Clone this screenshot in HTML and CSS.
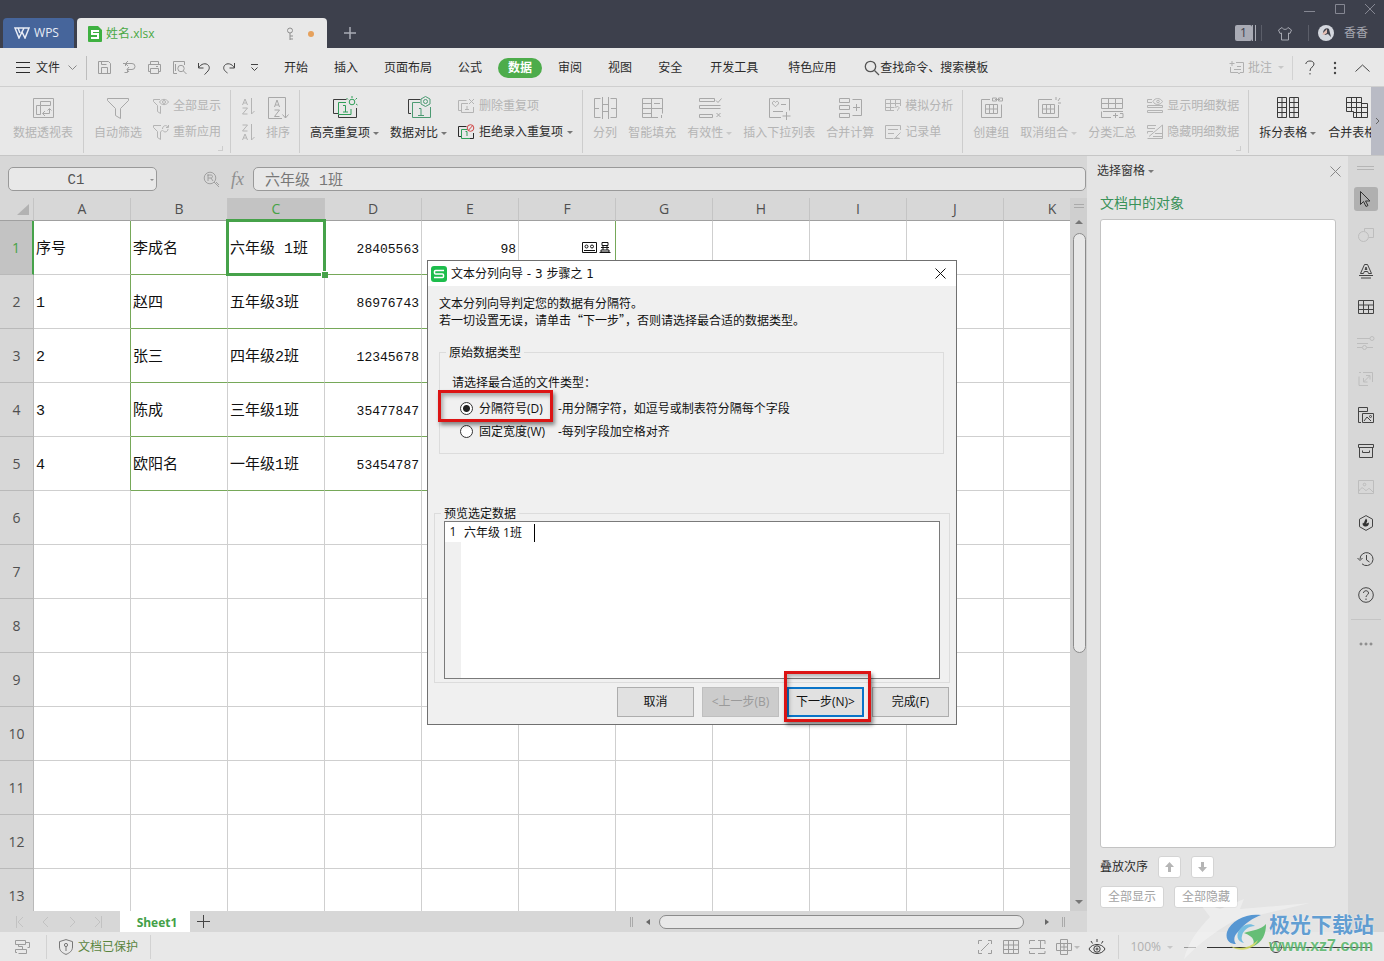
FILE: index.html
```html
<!DOCTYPE html>
<html lang="zh-CN">
<head>
<meta charset="utf-8">
<title>姓名.xlsx - WPS</title>
<link rel="stylesheet" href="styles.css">
</head>
<body>
<header class="titlebar">
  <button class="wps"><svg class="ic w2" width="16" height="12" viewBox="0 0 16 12"><path d="M1 1h14l-4 10-3-6-3 6L1 1l3 0 2 5M8 5l2-4"/></svg>WPS</button>
  <div class="doctab">
    <svg width="14" height="16" viewBox="0 0 14 16"><path fill="#3fb141" d="M1 0h9l4 4v11a1 1 0 0 1-1 1H1a1 1 0 0 1-1-1V1a1 1 0 0 1 1-1z"/><path fill="none" stroke="#fff" stroke-width="2" d="M11 5H4v3h6v4H3"/></svg>
    <span class="docname">姓名.xlsx</span>
    <svg class="ic key" width="10" height="14" viewBox="0 0 10 14"><circle cx="5" cy="3.500" r="2.500"/><path d="M5 6v7M5 9h3M5 12h3"/></svg>
    <i class="unsaved"></i>
  </div>
  <button class="newtab" aria-label="新建"><svg class="ic w2" width="12" height="12" viewBox="0 0 12 12"><path d="M6 0v12M0 6h12"/></svg></button>
  <div class="winside">
    <div class="winbtns">
      <button aria-label="最小化"><svg class="ic" width="11" height="11" viewBox="0 0 11 11"><path d="M0 8.500h11"/></svg></button>
      <button aria-label="最大化"><svg class="ic" width="11" height="11" viewBox="0 0 11 11"><path d="M1.500 1.500h9v9h-9z"/></svg></button>
      <button aria-label="关闭"><svg class="ic" width="11" height="11" viewBox="0 0 11 11"><path d="M1 1l10 10M11 1L1 11"/></svg></button>
    </div>
    <div class="user">
      <span class="count">1</span><span class="bars"></span>
      <i class="vsep"></i>
      <svg class="ic shirt" width="16" height="15" viewBox="0 0 16 15"><path d="M5 1.500L1.500 4 3 7.500l1.500-.5v7h7V7l1.500.5L14.500 4 11 1.500C10 4 6 4 5 1.500z"/></svg>
      <i class="vsep"></i>
      <svg width="16" height="16" viewBox="0 0 16 16"><circle cx="8" cy="8" r="8" fill="#d4d7de"/><path d="M5 8C5 4 9 2 11 4l2 8-3-3-3 1z" fill="#40424c"/><path d="M4 9l5-5v4l-3 2z" fill="#e3bdb4"/></svg>
      <span>香香</span>
    </div>
  </div>
</header>

<nav class="menubar">
  <button class="file"><svg class="ic" width="14" height="11" viewBox="0 0 14 11"><path d="M0 .5h14M0 5.500h14M0 10.500h14"/></svg>文件<svg class="ic chev" width="9" height="6" viewBox="0 0 9 6"><path d="M.5.5l4 4 4-4"/></svg></button>
  <div class="qat">
    <button aria-label="保存"><svg class="ic" width="15" height="15" viewBox="0 0 15 15"><path d="M1.500 1.500h10l2 2v10h-12zM4.500 13.500v-6h6v6M4.500 1.500v3h5"/></svg></button>
    <button aria-label="输出"><svg class="ic" width="15" height="15" viewBox="0 0 15 15"><path d="M3.500 6V3.500H10a3 3 0 0 1 0 6H5.500v3h-3M6 1L3.500 3.500 6 6M1 3.500h3M7 7l-2 2.500L7 12"/></svg></button>
    <button aria-label="打印"><svg class="ic" width="15" height="15" viewBox="0 0 15 15"><path d="M3.500 4.500v-3h8v3M3.500 11.500h-2v-7h12v7h-2M3.500 8.500h8v5h-8zM9 6.500h2"/></svg></button>
    <button aria-label="打印预览"><svg class="ic" width="15" height="15" viewBox="0 0 15 15"><path d="M5 13.500H1.500v-12h11V5M11.500 11l3 3M3.500 4v7"/><circle cx="9" cy="8.500" r="3.200"/></svg></button>
    <button class="on" aria-label="撤销"><svg class="ic" width="14" height="14" viewBox="0 0 14 14"><path d="M1.500 2v5h5M1.500 7C4 2.500 9 1.500 11.500 4.500c2 3 0 5.500-4 9"/></svg></button>
    <button class="on" aria-label="恢复"><svg class="ic" width="14" height="14" viewBox="0 0 14 14"><path d="M12.500 2v5h-5M12.500 7C10 2.500 5 1.500 2.500 4.500c-2 3 0 5.500 3 7.500"/></svg></button>
    <button class="on" aria-label="更多"><svg class="ic" width="9" height="8" viewBox="0 0 9 8"><path d="M1 .5h7M1.500 3.500l3 3 3-3"/></svg></button>
  </div>
  <div class="tabs">
    <button>开始</button><button>插入</button><button>页面布局</button><button>公式</button><button class="active">数据</button><button>审阅</button><button>视图</button><button>安全</button><button class="wide">开发工具</button><button class="wide">特色应用</button>
  </div>
  <button class="search"><svg class="ic" width="16" height="16" viewBox="0 0 16 16"><circle cx="6.500" cy="6.500" r="5.200"/><path d="M10.500 10.500l4.500 4.500"/></svg>查找命令、搜索模板</button>
  <div class="menuright">
    <button class="dim"><svg class="ic" width="16" height="14" viewBox="0 0 16 14"><path d="M7 1.500h7.500v10H11l-1 1.500-1-1.500H1.500V6M3 0v5M.5 2.500h5M5 8.500h7M8 5.500h4"/></svg>批注<i class="arr"></i></button>
    <i class="vsep light"></i>
    <button aria-label="帮助"><svg class="ic" width="10" height="15" viewBox="0 0 10 15"><path d="M.8 4C1 0 9 0 9 4c0 3-4 3-4 7M5 13v1.500"/></svg></button>
    <button aria-label="更多"><svg width="4" height="14" viewBox="0 0 4 14" fill="#444"><circle cx="2" cy="2" r="1.200"/><circle cx="2" cy="7" r="1.200"/><circle cx="2" cy="12" r="1.200"/></svg></button>
    <button aria-label="收起"><svg class="ic" width="15" height="8" viewBox="0 0 15 8"><path d="M.5 7.500l7-6.500 7 6.500"/></svg></button>
  </div>
</nav>

<div class="ribbon">
  <div class="groups">
    <div class="group">
      <button class="big"><svg class="ic" width="24" height="24" viewBox="0 0 24 24"><path d="M2.500 2.500h20v19h-20zM9.500 5.500h10v4h-10zM5.500 9.500h4v9h-4zM12 17.500h6.500V13M14 15l-2.500 2.500L14 20M16.500 14.500l2-2 2 2"/></svg><span>数据透视表</span></button>
    </div>
    <div class="group corner-mark">
      <button class="big"><svg class="ic" width="24" height="24" viewBox="0 0 24 24"><path d="M1.500 2.500h21v2l-8 8v10l-5-3v-7l-8-8z"/></svg><span>自动筛选</span></button>
      <div class="stack">
        <button><svg class="ic" width="16" height="16" viewBox="0 0 16 16"><path d="M7 1.500H.5v2l4 4v6l3 2V8M6.500 4c2-3.500 7-3.500 9 0-2 3.500-7 3.500-9 0z"/><circle cx="11" cy="4" r="1.500"/></svg>全部显示</button>
        <button><svg class="ic" width="16" height="16" viewBox="0 0 16 16"><path d="M8 1.500H.5v2l4 4v6l3 2V8l2-2M9.500 5c0-3.500 4-4.500 5.500-2M15.500 1v2.500H13M15 5c0 3-4 4-5 1.500"/></svg>重新应用</button>
      </div>
    </div>
    <div class="group">
      <div class="stack narrow">
        <button aria-label="升序"><svg class="ic" width="14" height="17" viewBox="0 0 14 17"><path d="M1.500 7l2.500-6 2.500 6M2.500 5h3M1.500 10h5l-5 6h5M10.500 0v16M10.500 16l3-3"/></svg></button>
        <button aria-label="降序"><svg class="ic" width="14" height="17" viewBox="0 0 14 17"><path d="M1.500 1h5l-5 6h5M1.500 16L4 10l2.500 6M2.500 14h3M10.500 0v16M10.500 16l3-3"/></svg></button>
      </div>
      <button class="big"><svg class="ic" width="24" height="24" viewBox="0 0 24 24"><path d="M16 22.500H2.500v-21h17V14M8.500 11L11 4l2.500 7M9.500 9h3M8.500 14h5l-5 6.500h5M19.500 8v14M16.500 18.500l3 3.500 3-3.500"/></svg><span>排序</span></button>
    </div>
    <div class="group">
      <button class="big on"><svg class="ic" width="26" height="24" viewBox="0 0 26 24"><path d="M6 17.500H1.500v-14h13M24.500 12v9.500h-18v-3"/><path stroke="#2f9e58" d="M14 6.500H6.500v12H19V13M11 9.500h2.500V16M11 16h5M20 2V0M14.500 2L16 3.500M25 2l-1.500 1.500M24 8l1.500 1"/><circle stroke="#2f9e58" cx="20" cy="6" r="2.800"/></svg><span>高亮重复项<i class="arr"></i></span></button>
      <button class="big on"><svg class="ic" width="26" height="24" viewBox="0 0 26 24"><path d="M5 17.500H2.500v-14h12"/><path stroke="#4c9a72" d="M14 6.500H6.500v15h18V11M13 12.500h2V19M12 19.500h6M19.500.5L24 3v5l-4.500 2.500L15 8V3z"/><circle stroke="#4c9a72" cx="19.500" cy="5.500" r="2"/></svg><span>数据对比<i class="arr"></i></span></button>
      <div class="stack">
        <button><svg class="ic" width="17" height="16" viewBox="0 0 17 16"><path d="M3 12.500H.5v-10h8M10 5.500H3.500v9h12V9M11 1l5 5M16 1l-5 5M9 8v3M7 11.500h4"/></svg>删除重复项</button>
        <button class="on"><svg class="ic" width="17" height="16" viewBox="0 0 17 16"><path d="M3 12.500H.5v-10h8M6 14.500h9.500V9"/><path stroke="#2f9e58" d="M9 5.500H3.500v9H12M7.500 7.500h1.500V12"/><circle cx="12.500" cy="4" r="3.300" stroke="#d04545"/><path stroke="#d04545" d="M10.500 6.200l4-4.400"/></svg>拒绝录入重复项<i class="arr"></i></button>
      </div>
    </div>
    <div class="group">
      <button class="big"><svg class="ic" width="24" height="24" viewBox="0 0 24 24"><path d="M7.500 2.500h-6v19h6M9.500 1v22M15.500 1v22M17.500 2.500h6v19h-6M1 12.500h5M9 8.500h6M9 15.500h6M18 12.500h5"/></svg><span>分列</span></button>
      <button class="big"><svg class="ic" width="24" height="24" viewBox="0 0 24 24"><path d="M2.500 2.500h20v15M18 21.500H2.500v-19M11.500 2.500v19M2.500 7.500h9M2.500 12.500h20M2.500 17.500h9M14 7.500h6M21.500 19v3"/></svg><span>智能填充</span></button>
      <button class="big"><svg class="ic" width="24" height="24" viewBox="0 0 24 24"><path d="M1.500 2.500h15v3h-15zM1.500 9.500h21M1.500 12.500h21M1.500 9.500v3M1.500 18.500h13v3h-13zM18 4.500l2 2 3.500-4M18.500 17l4 4M22.500 17l-4 4"/></svg><span>有效性<i class="arr"></i></span></button>
      <button class="big"><svg class="ic" width="24" height="24" viewBox="0 0 24 24"><path d="M14 21.500H2.500v-19h20v12M5.500 6.500c1-2 2.500-1 3 0 .5-1 2-2 3 0 .5 2-2 3-3 4-1-1-3.500-2-3-4zM14 8.500h5M6 15.500h10M19.500 16v8M15.500 20h8"/></svg><span>插入下拉列表</span></button>
      <button class="big"><svg class="ic" width="24" height="24" viewBox="0 0 24 24"><path d="M1.500 2.500h10v4h-10zM1.500 9.500h10v4h-10zM1.500 17.500h10v4h-10zM14.500 3.500h9v16h-9M18.500 8v7M15 11.500h7"/></svg><span>合并计算</span></button>
      <div class="stack">
        <button><svg class="ic" width="16" height="16" viewBox="0 0 16 16"><path d="M9 12.500H.5v-11h15V8M.5 5.500h15M.5 9.500h9M5.500 1.500v11M10.500 1.500v7M10.500 10c1-3 5-1 3 1-1 1-1 1-1 2"/></svg>模拟分析</button>
        <button><svg class="ic" width="16" height="16" viewBox="0 0 16 16"><path d="M15.500 6V1.500H.5v13H8M3 5.500h10M3 9.500h6M8.500 14.500h6l-4-1 5-5"/></svg>记录单</button>
      </div>
    </div>
    <div class="group corner-mark">
      <button class="big"><svg class="ic" width="24" height="24" viewBox="0 0 24 24"><path d="M11 3.500H2.500v18h20v-13M6.500 8.500h12v9h-12zM6.500 13h12M10.500 8.500v9M14.500 8.500v9M13.500 2h4v3h-4zM19.500 2h4v3h-4zM16 3.500h5"/></svg><span>创建组</span></button>
      <button class="big"><svg class="ic" width="24" height="24" viewBox="0 0 24 24"><path d="M15 3.500H1.500v18h20V9M5.500 8.500h12v9h-12zM5.500 13h12M9.500 8.500v9M13.500 8.500v9M19 1v3M21 5l2-3M21 7h3"/></svg><span>取消组合<i class="arr"></i></span></button>
      <button class="big"><svg class="ic" width="24" height="24" viewBox="0 0 24 24"><path d="M1.500 2.500h21v10h-21zM1.500 7.500h21M8.500 2.500v10M15.500 2.500v10M3 15.500h20M1.500 15.500v6H11M15.500 17v5M13 19.500h5M20 17.500h3v4h-4"/></svg><span>分类汇总</span></button>
      <div class="stack">
        <button><svg class="ic" width="16" height="16" viewBox="0 0 16 16"><path d="M5 1.500H.5v3H5M.5 7.500h15v2H.5zM.5 12.500h15v2H.5zM6 3.500c2-4 7-4 9.500 0-2.500 4-7.500 4-9.500 0z"/><circle cx="11" cy="3.500" r="1.300"/></svg>显示明细数据</button>
        <button><svg class="ic" width="16" height="16" viewBox="0 0 16 16"><path d="M9 1.500H.5v3H8M6 7.500H.5v2M.5 14.500h15V1L2 12.500M8 9.500h7M6 12.500h9"/></svg>隐藏明细数据</button>
      </div>
    </div>
    <div class="group last">
      <button class="big on"><svg class="ic" width="24" height="24" viewBox="0 0 24 24"><path d="M1.500 1.500h9v20h-9zM13.500 1.500h9v20h-9zM1.500 6.500h9M1.500 11.500h9M1.500 16.500h9M13.500 6.500h9M13.500 11.500h9M13.500 16.500h9M6 1.500v20M18 1.500v20"/></svg><span>拆分表格<i class="arr"></i></span></button>
      <button class="big on"><svg class="ic" width="24" height="24" viewBox="0 0 24 24"><path d="M1.500 1.500h15v6h6v14h-14v-6h-7zM1.500 6.500h15M1.500 11.500h21M8 16.500h14M6.500 1.500v14M11.500 1.500v20M16.500 7v14"/></svg><span>合并表格<i class="arr"></i></span></button>
    </div>
  </div>
  <button class="ribbonnext" aria-label="更多功能"><svg class="ic" width="5" height="8" viewBox="0 0 5 8"><path d="M1 1l3 3-3 3"/></svg></button>
</div>

<main class="work">
  <section class="book">
    <div class="formula">
      <label class="namebox"><input type="text" value="C1" aria-label="名称框"><i class="arr"></i></label>
      <div class="fx"><svg class="ic" width="17" height="17" viewBox="0 0 17 17"><circle cx="7" cy="7" r="5.800"/><path d="M11 11l5 5M13 11l3 3M5 10V4h3c2 0 2 3 0 3H5M4 4h2M8 7l2 3"/></svg><em>fx</em></div>
      <input class="fbar" type="text" value="六年级 1班" aria-label="编辑栏">
    </div>
    <div class="gridrow">
      <div class="gridwrap">
        <table class="grid">
          <colgroup><col class="rowcol"><col><col><col><col><col><col><col><col><col><col><col></colgroup>
          <thead><tr><th class="corner"><svg width="12" height="11" viewBox="0 0 12 11"><path d="M12 0v11H0z" fill="#b2b2b2"/></svg></th><th>A</th><th>B</th><th class="cur">C</th><th>D</th><th>E</th><th>F</th><th>G</th><th>H</th><th>I</th><th>J</th><th>K</th></tr></thead>
          <tbody>
            <tr class="data"><th class="cur">1</th><td>序号</td><td>李成名</td><td class="sel">六年级 1班</td><td class="num">28405563</td><td class="num">98</td><td class="pics"><svg class="ic" width="32" height="14" viewBox="0 0 32 14"><path d="M1.500 1.500h14v10h-14zM3 9.500h11"/><circle cx="5.500" cy="5.500" r="1.500"/><circle cx="11" cy="5.500" r="1.500"/><path d="M21 1.500h6v3h-6zM20 6.500h8M22 4v5M26 4v5M18.500 11.500h11M20 9h8v2h-8z"/></svg></td><td></td><td></td><td></td><td></td><td></td></tr>
            <tr class="data"><th>2</th><td>1</td><td>赵四</td><td>五年级3班</td><td class="num">86976743</td><td></td><td></td><td></td><td></td><td></td><td></td><td></td></tr>
            <tr class="data"><th>3</th><td>2</td><td>张三</td><td>四年级2班</td><td class="num">12345678</td><td></td><td></td><td></td><td></td><td></td><td></td><td></td></tr>
            <tr class="data"><th>4</th><td>3</td><td>陈成</td><td>三年级1班</td><td class="num">35477847</td><td></td><td></td><td></td><td></td><td></td><td></td><td></td></tr>
            <tr class="data"><th>5</th><td>4</td><td>欧阳名</td><td>一年级1班</td><td class="num">53454787</td><td></td><td></td><td></td><td></td><td></td><td></td><td></td></tr>
            <tr><th>6</th><td></td><td></td><td></td><td></td><td></td><td></td><td></td><td></td><td></td><td></td><td></td></tr>
            <tr><th>7</th><td></td><td></td><td></td><td></td><td></td><td></td><td></td><td></td><td></td><td></td><td></td></tr>
            <tr><th>8</th><td></td><td></td><td></td><td></td><td></td><td></td><td></td><td></td><td></td><td></td><td></td></tr>
            <tr><th>9</th><td></td><td></td><td></td><td></td><td></td><td></td><td></td><td></td><td></td><td></td><td></td></tr>
            <tr><th>10</th><td></td><td></td><td></td><td></td><td></td><td></td><td></td><td></td><td></td><td></td><td></td></tr>
            <tr><th>11</th><td></td><td></td><td></td><td></td><td></td><td></td><td></td><td></td><td></td><td></td><td></td></tr>
            <tr><th>12</th><td></td><td></td><td></td><td></td><td></td><td></td><td></td><td></td><td></td><td></td><td></td></tr>
            <tr><th>13</th><td></td><td></td><td></td><td></td><td></td><td></td><td></td><td></td><td></td><td></td><td></td></tr>
          </tbody>
        </table>
      </div>
      <div class="vscroll"><i class="split"></i><i class="up"></i><div class="vtrack"><div class="vthumb"></div></div><i class="down"></i></div>
    </div>
    <div class="sheets">
      <div class="navs">
        <button aria-label="第一张"><svg class="ic" width="10" height="12" viewBox="0 0 10 12"><path d="M1.500 0v12M8 1L3 6l5 5"/></svg></button>
        <button aria-label="上一张"><svg class="ic" width="10" height="12" viewBox="0 0 10 12"><path d="M7 1L2 6l5 5"/></svg></button>
        <button aria-label="下一张"><svg class="ic" width="10" height="12" viewBox="0 0 10 12"><path d="M3 1l5 5-5 5"/></svg></button>
        <button aria-label="最后一张"><svg class="ic" width="10" height="12" viewBox="0 0 10 12"><path d="M8.500 0v12M2 1l5 5-5 5"/></svg></button>
      </div>
      <button class="sheet">Sheet1</button>
      <button class="addsheet" aria-label="新建工作表"><svg class="ic" width="13" height="13" viewBox="0 0 13 13"><path d="M6.500 0v13M0 6.500h13"/></svg></button>
      <div class="hscroll"><i class="grip"></i><i class="left"></i><div class="hthumb"></div><i class="right"></i><i class="grip"></i></div>
    </div>
  </section>

  <aside class="pane">
    <div class="panehead"><button>选择窗格<i class="arr"></i></button><button aria-label="关闭窗格"><svg class="ic" width="11" height="11" viewBox="0 0 11 11"><path d="M.5.5l10 10M10.500.5l-10 10"/></svg></button></div>
    <h2>文档中的对象</h2>
    <div class="objlist"></div>
    <div class="order"><span>叠放次序</span>
      <button aria-label="上移"><svg width="9" height="11" viewBox="0 0 9 11"><path fill="#b5b5b5" d="M4.500 0L9 5H6v5H3V5H0z"/></svg></button>
      <button aria-label="下移"><svg width="9" height="11" viewBox="0 0 9 11"><path fill="#b5b5b5" d="M4.500 10L9 5H6V0H3v5H0z"/></svg></button></div>
    <div class="showhide"><button>全部显示</button><button>全部隐藏</button></div>
  </aside>

  <nav class="rail">
    <i class="handle"></i>
    <button class="cur" aria-label="选择"><svg class="ic" width="16" height="18" viewBox="0 0 16 18"><path d="M2.500 1.500v13l3-3 2.500 5 2-1-2.500-4.500h4.500z"/></svg></button>
    <button class="off" aria-label="形状"><svg class="ic" width="18" height="18" viewBox="0 0 18 18"><circle cx="6.500" cy="10.500" r="5"/><path d="M7.500 5V2.500h9v9H12"/></svg></button>
    <button aria-label="艺术字"><svg class="ic" width="16" height="16" viewBox="0 0 16 16"><path d="M2.500 10.500L6.500 1.500h3l4 9h-3l-.8-2H6.300l-.8 2zM7 6.500h2L8 4zM1 12.500h14M3 15h10"/></svg></button>
    <button aria-label="表格"><svg class="ic" width="16" height="16" viewBox="0 0 16 16"><path d="M.5 1.500h15v13H.5zM.5 6h15M.5 10.500h15M5.500 1.500v13M10.500 6v8.500"/></svg></button>
    <button class="off" aria-label="设置"><svg class="ic" width="18" height="16" viewBox="0 0 18 16"><path d="M0 3.500h13M0 8.500h11M0 12.500h5M10 12.500h6"/><circle cx="15" cy="3.500" r="2"/><circle cx="7.500" cy="12.500" r="2"/></svg></button>
    <button class="off" aria-label="大小"><svg class="ic" width="16" height="16" viewBox="0 0 16 16"><path d="M1 5.500v9h9M5 1.500h9.500V11M1 1.500h2M5.500 11l6-6M8 4.500h4v4M5.500 7v4h4"/></svg></button>
    <button aria-label="图库"><svg class="ic" width="16" height="17" viewBox="0 0 16 17"><path d="M3 15.500H.5V.5h9v4M.5 4.500h9M4.500 6.500h11v9h-11zM6 14l3-4 3 3M13 14l-2-2"/><circle cx="12.500" cy="9.500" r="1"/></svg></button>
    <button aria-label="归档"><svg class="ic" width="16" height="16" viewBox="0 0 16 16"><path d="M.5 1.500h15v3H.5zM1.500 4.500v10h13v-10M4.500 7.500V9.500h7V7.500"/></svg></button>
    <button class="off" aria-label="图片"><svg class="ic" width="16" height="16" viewBox="0 0 16 16"><path d="M.5 1.500h15v13H.5zM1 12c3-5 4-3 6-1s3-3 5-1l3 3"/><circle cx="6.500" cy="5.500" r="1.300"/></svg></button>
    <button aria-label="推荐"><svg class="ic" width="16" height="16" viewBox="0 0 16 16"><path d="M8 .6l6.500 3.600v7.500L8 15.400l-6.500-3.700V4.200z"/><path fill="#333" d="M8 3.500c2 2 1 4 0 5 2 0 2-1 3-1 0 3-2 4-3 4-3 0-4-2-3-4l1 1c0-2 1-3 2-5z" stroke="none"/></svg></button>
    <button aria-label="历史"><svg class="ic" width="17" height="16" viewBox="0 0 17 16"><path d="M3 8a6.500 6.500 0 1 1 2 4.800M.5 7L3 9.500 5.500 7M9.500 4v5l3 2"/></svg></button>
    <button aria-label="帮助"><svg class="ic" width="16" height="16" viewBox="0 0 16 16"><circle cx="8" cy="8" r="7.300"/><path d="M5.500 6c0-3 5-3 5 0 0 2-2.500 2-2.500 4M8 11.500V13"/></svg></button>
    <hr>
    <button class="more" aria-label="更多"><svg class="ic" width="14" height="4" viewBox="0 0 14 4"><circle cx="2" cy="2" r="1"/><circle cx="7" cy="2" r="1"/><circle cx="12" cy="2" r="1"/></svg></button>
  </nav>
</main>

<footer class="status">
  <svg class="ic" width="17" height="16" viewBox="0 0 17 16"><path d="M1.500 1.500h10v4h-10zM3 13.500h-1.500v-3h11v4h-8M4.500 5.500v2h4v3M11.500 3.500h4v5h-2"/></svg>
  <i class="vsep light"></i>
  <button class="protect"><svg class="ic" width="14" height="16" viewBox="0 0 14 16"><path d="M7 .6l6.500 2V8c0 4-3 6-6.500 7.400C3.500 14 .5 12 .5 8V2.600zM7 7.500V12"/><circle cx="7" cy="6" r="1.600"/></svg>文档已保护</button>
  <i class="vsep light"></i>
  <div class="views">
    <svg class="ic" width="16" height="16" viewBox="0 0 16 16"><path d="M1.500 5V1.500H5M11 1.500h3.500V5M14.500 11v3.500H11M5 14.500H1.500V11M4 12l8-8"/></svg>
    <svg class="ic" width="16" height="16" viewBox="0 0 16 16"><path d="M.5 1.500h15v13H.5zM.5 6h15M.5 10.500h15M5.500 1.500v13M10.500 1.500v13"/></svg>
    <svg class="ic" width="17" height="16" viewBox="0 0 17 16"><path d="M6 1.500H.5V5M9 1.500h7V5M11.500 1.500v8M.5 9.500h15.500M.5 12v2.500H6M9 14.500h7V12"/></svg>
    <span class="pair"><svg class="ic" width="16" height="16" viewBox="0 0 16 16"><path d="M4.500.5h7v15h-7zM.5 4.500h15v7H.5zM4.500 8h7M8 4v8"/></svg><i class="arr"></i></span>
    <svg class="ic dark" width="18" height="18" viewBox="0 0 18 18"><path d="M1 11c3-6 13-6 16 0-3 6-13 6-16 0zM9 1v3M3 3l1.500 2.500M15 3l-1.500 2.500"/><circle cx="9" cy="11" r="3.200"/><circle cx="9" cy="11" r="1"/></svg>
  </div>
  <i class="vsep light"></i>
  <button class="zoom">100%<i class="arr"></i></button>
  <i class="minus"></i>
  <input class="slider" type="range" min="0" max="100" value="42" aria-label="缩放">
</footer>

<section class="dialog" role="dialog" aria-labelledby="dlgtitle">
  <div class="dlgbar">
    <svg width="16" height="16" viewBox="0 0 16 16"><rect width="16" height="16" rx="3" fill="#1dbd4c"/><path fill="none" stroke="#fff" stroke-width="1.500" d="M13 4.500H4.500a1 1 0 0 0-1 1v1.500a1 1 0 0 0 1 1h7a1 1 0 0 1 1 1v1.500a1 1 0 0 1-1 1H3"/></svg>
    <h1 id="dlgtitle">文本分列向导 - 3 步骤之 1</h1>
    <button aria-label="关闭"><svg class="ic" width="11" height="11" viewBox="0 0 11 11"><path d="M.5.5l10 10M10.500.5l-10 10"/></svg></button>
  </div>
  <p class="intro">文本分列向导判定您的数据有分隔符。<br>若一切设置无误，请单击“下一步”，否则请选择最合适的数据类型。</p>
  <fieldset class="types">
    <legend>原始数据类型</legend>
    <p>请选择最合适的文件类型：</p>
    <div class="opt"><label class="marked"><input type="radio" name="kind" checked>分隔符号(D)</label><span>-用分隔字符，如逗号或制表符分隔每个字段</span></div>
    <div class="opt"><label><input type="radio" name="kind">固定宽度(W)</label><span>-每列字段加空格对齐</span></div>
  </fieldset>
  <fieldset class="preview">
    <legend>预览选定数据</legend>
    <div class="prevbox"><span class="ln">1</span><span class="txt">六年级 1班</span></div>
  </fieldset>
  <div class="btns"><button>取消</button><button disabled>&lt;上一步(B)</button><button class="next">下一步(N)&gt;</button><button>完成(F)</button></div>
</section>

<div class="mark">
  <svg class="streak" width="190" height="60" viewBox="0 0 190 60"><path fill="#fff" opacity=".4" d="M14 2l22 8L60 0l-4 10 70-6-76 18C28 34 12 48 0 60c4-16 14-30 26-42z"/></svg>
  <svg class="swirl" width="42" height="38" viewBox="0 0 42 38"><path fill="#3f8ad0" d="M36 1C22-1 6 6 2 18c-2 8 3 12 9 12-3-4-2-9 3-13C20 9 28 4 36 1z"/><path fill="#62b7e0" d="M16 14c4-4 10-5 14-2-6 0-12 4-13 10-1 3 0 5 2 7-7-1-9-9-3-15z"/><path fill="#4fb763" d="M19 19c8-3 17-3 22-9 0 10-3 18-14 23 3-5 3-10-8-14z"/><path fill="#d3da5c" d="M5 32c10 4 20 2 28-6-3 8-16 14-28 6z"/></svg>
  <div><b>极光下载站</b><span>www.xz7.com</span></div>
</div>
</body>
</html>
```

FILE: styles.css
```css
* { box-sizing: border-box; }
body {
  margin: 0; height: 100vh; display: flex; flex-direction: column; overflow: hidden; position: relative;
  font: 12px/16px "Open Sans", "Noto Sans CJK SC", sans-serif; color: #2b2b2b; background: #e8e8e8;
}
button { font: inherit; color: inherit; background: none; border: 0; padding: 0; margin: 0; white-space: nowrap; }
input { font: inherit; color: inherit; margin: 0; }
svg { flex: none; display: block; }
.ic { fill: none; stroke: currentColor; stroke-width: 1; }
.w2 { stroke-width: 2; }
.arr { display: inline-block; flex: none; border: 3px solid transparent; border-top-color: currentColor; border-bottom: 0; opacity: .6; margin-left: 3px; vertical-align: middle; }
.vsep { width: 1px; height: 16px; background: #5b5e69; flex: none; }
.vsep.light { height: 24px; background: #d2d2d2; }

/* title bar */
.titlebar { flex: none; height: 48px; background: #3d404c; display: flex; align-items: flex-end; padding-left: 3px; }
.wps { width: 71px; height: 30px; background: #46659b; border-radius: 4px 4px 0 0; color: #e8ecf5; display: flex; align-items: center; justify-content: center; gap: 4px; font-size: 12px; padding-right: 4px; }
.wps svg { stroke-width: 1.500; }
.doctab { width: 250px; height: 30px; margin-left: 3px; background: #e8e8e8; border-radius: 4px 4px 0 0; display: flex; align-items: center; padding: 2px 13px 0 11px; }
.docname { color: #4aa845; margin-left: 4px; flex: 1; }
.key { color: #8f8f8f; }
.unsaved { width: 6px; height: 6px; border-radius: 50%; background: #e6a15c; margin-left: 13px; }
.newtab { color: #a9acb5; padding: 9px 17px; }
.newtab svg { stroke-width: 1.500; }
.winside { margin-left: auto; height: 48px; display: flex; flex-direction: column; align-items: flex-end; color: #a5a7b0; }
.winbtns { display: flex; gap: 19px; padding: 3px 9px 0 0; height: 24px; align-items: flex-start; color: #858792; }
.user { display: flex; align-items: center; height: 18px; padding-right: 16px; }
.count { width: 17px; height: 16px; border-radius: 2px; background: #a9abb5; color: #3d404c; text-align: center; }
.bars { width: 4px; height: 16px; border: solid #a9abb5; border-width: 0 1px; margin: 0 5px 0 0; }
.shirt { margin: 0 15px; }
.user .vsep + svg:not(.shirt) { margin: 0 10px 0 9px; }

/* menu bar */
.menubar { flex: none; height: 39px; display: flex; align-items: center; border-bottom: 1px solid #cfcfcf; padding: 1px 0 0 16px; }
.file { display: flex; align-items: center; gap: 6px; padding-right: 9px; height: 24px; border-right: 1px solid #bdbdbd; }
.chev { margin-left: 2px; color: #888; }
.qat { display: flex; gap: 1px; padding-left: 5px; color: #9d9d9d; }
.qat button { width: 24px; height: 24px; display: flex; align-items: center; justify-content: center; }
.qat .on { color: #444; }
.tabs { display: flex; gap: 6px; margin-left: 8px; }
.tabs button { height: 20px; padding: 0 10px; border-radius: 10px; }
.tabs .wide { padding: 0 12px; }
.tabs .active { background: #4dac4b; color: #fff; font-weight: 700; }
.search { display: flex; align-items: center; margin-left: 16px; }
.search svg { stroke-width: 1.300; color: #555; }
.menuright { margin-left: auto; display: flex; align-items: center; padding-right: 14px; color: #444; }
.menuright > button + button { margin-left: 18px; }
.menuright .vsep { margin: 0 8px; }
.menuright .vsep + button { margin-left: 0; padding-left: 4px; }
.dim { display: flex; align-items: center; gap: 3px; color: #b0b0b0; }

/* ribbon */
.ribbon { flex: none; height: 69px; display: flex; border-bottom: 1px solid #c6c6c6; color: #b4b4b4; }
.groups { flex: 1; min-width: 0; overflow: hidden; display: flex; padding: 3px 0 2px 3px; }
.group { display: flex; gap: 11px; padding: 0 10px; border-right: 1px solid #cdcdcd; flex: none; }
.group + .group { padding-right: 9px; }
.group.last { border: 0; gap: 12px; }
.corner-mark { background: linear-gradient(#cdcdcd, #cdcdcd) right 7px bottom 2px / 5px 1px no-repeat, linear-gradient(#cdcdcd, #cdcdcd) right 7px bottom 2px / 1px 5px no-repeat; }
.big { display: flex; flex-direction: column; align-items: center; padding-top: 6px; gap: 5px; }
.big svg { stroke: #a8a8a8; }
.on { color: #2b2b2b; }
.big.on svg { stroke: #3b3b3b; }
.stack { display: flex; flex-direction: column; gap: 10px; padding-top: 8px; }
.stack button { display: flex; align-items: center; gap: 4px; height: 16px; }
.stack .arr { margin-left: 0; }
.ribbonnext { width: 13px; background: #b9bbc5; color: #666; display: flex; align-items: center; justify-content: center; }

/* workspace */
.work { flex: 1; min-height: 0; display: flex; }
.book { flex: 1; min-width: 0; display: flex; flex-direction: column; background: #d7d7d7; }
.formula { flex: none; height: 42px; padding: 4px 1px 0 8px; display: flex; align-items: center; font-family: "Liberation Mono", "Noto Sans CJK SC", monospace; }
.namebox { width: 149px; height: 24px; border: 1px solid #999; border-radius: 5px; background: #e8e8e8; display: flex; align-items: center; padding: 2px 2px 0 0; color: #555; }
.namebox input { flex: 1; min-width: 0; border: 0; background: none; text-align: center; font-size: 14px; padding: 0 4px 0 0; }
.namebox .arr { border-width: 2px; border-bottom: 0; }
.fx { display: flex; align-items: center; gap: 11px; margin: 0 9px 0 46px; color: #a0a0a0; }
.fx em { font: italic 18px/20px "Liberation Serif", serif; color: #8f8f8f; }
.fbar { flex: 1; min-width: 0; height: 24px; border: 1px solid #999; border-radius: 5px; background: #e8e8e8; padding: 0 11px; font-size: 15px; color: #777; }
.gridrow { flex: 1; min-height: 0; display: flex; }
.gridwrap { flex: 1; min-width: 0; overflow: hidden; background: #fff; }
.grid { table-layout: fixed; width: 100%; border-collapse: separate; border-spacing: 0; }
.grid col { width: 97px; }
.grid .rowcol { width: 34px; }
.grid th { background: #d7d7d7; color: #505050; font-weight: 400; font-size: 14px; line-height: 20px; padding: 0; border: solid #b9b9b9; border-width: 0 1px 1px 0; }
.grid thead th { height: 23px; border-bottom-color: #a0a0a0; border-right-color: #c4c4c4; }
.grid tbody tr { height: 54px; }
.grid td { border: solid #cfcfcf; border-width: 0 1px 1px 0; padding: 5px 2px 0; vertical-align: middle; color: #111; font: 15px/20px "Liberation Mono", "Noto Sans CJK SC", monospace; white-space: nowrap; }
.grid td.num { text-align: right; font-size: 13px; }
.grid th.cur { background: #c3c3c3; color: #46a246; }
.grid tbody th.cur { border-right: 2px solid #46a24a; }
.grid .corner svg { margin: 0 0 0 17px; }
.grid .data td:nth-child(n+3):nth-child(-n+7) { border-bottom-color: #76a859; }
.grid .data td:nth-child(2), .grid .data td:nth-child(7) { border-right-color: #76a859; }
.grid td.pics { padding: 0 2px; }
.pics svg { margin-left: auto; }
.sel { position: relative; }
.sel::before { content: ""; position: absolute; inset: -2px; border: 3px solid #46a24a; }
.sel::after { content: ""; position: absolute; right: -4px; bottom: -4px; width: 6px; height: 6px; background: #46a24a; border: solid #fff; border-width: 1px 0 0 1px; }
.vscroll { width: 17px; display: flex; flex-direction: column; align-items: center; background: #cfcfcf; }
.split { width: 10px; height: 4px; border: solid #aaa; border-width: 1px 0; margin: 6px 0 12px; }
.up { border: 4px solid transparent; border-bottom: 4px solid #777; border-top: 0; }
.down { border: 4px solid transparent; border-top: 4px solid #777; border-bottom: 0; margin-bottom: 7px; }
.vtrack { flex: 1; width: 100%; padding: 9px 1px 0 3px; }
.vthumb { height: 63%; border: 1px solid #8b8b8b; border-radius: 7px; background: #e8e8e8; }
.sheets { flex: none; height: 21px; display: flex; align-items: center; }
.navs { display: flex; gap: 16px; padding: 0 17px 0 15px; color: #c2c2c2; }
.sheet { height: 21px; width: 70px; padding: 2px 0 0 4px; background: #fff; color: #43a047; font-weight: 700; }
.addsheet { padding: 0 7px; color: #444; }
.hscroll { width: 457px; margin-left: auto; display: flex; align-items: center; padding-right: 22px; }
.grip { width: 3px; height: 10px; border: solid #aaa; border-width: 0 1px; }
.left, .right { border: 3px solid transparent; }
.left { border-right: 4px solid #666; border-left: 0; margin: 0 9px 0 13px; }
.right { border-left: 4px solid #666; border-right: 0; margin: 0 13px 0 21px; }
.hthumb { flex: 1; height: 14px; border: 1px solid #8b8b8b; border-radius: 7px; background: #e8e8e8; }

/* selection pane */
.pane { width: 261px; flex: none; background: #e4e4e4; padding: 6px 12px 24px 13px; display: flex; flex-direction: column; }
.panehead { display: flex; justify-content: space-between; align-items: center; height: 18px; margin: 0 -5px 0 -3px; color: #333; }
.panehead svg { color: #888; }
.pane h2 { margin: 13px 0 6px; font-size: 14px; line-height: 20px; font-weight: 400; color: #3a9259; }
.objlist { flex: 1; background: #fff; border: 1px solid #c3c3c3; border-radius: 3px; }
.order { display: flex; align-items: center; gap: 10px; margin-top: 8px; }
.pane .order button, .showhide button { background: #fff; border: 1px solid #d4d4d4; border-radius: 3px; height: 22px; color: #a3a3a3; }
.order button { width: 23px; display: flex; align-items: center; justify-content: center; }
.showhide { display: flex; gap: 10px; margin-top: 8px; }
.showhide button { width: 64px; }

/* side rail */
.rail { width: 36px; flex: none; background: #d7d7d7; display: flex; flex-direction: column; align-items: center; gap: 12px; color: #444; padding-right: 1px; }
.handle { width: 17px; height: 4px; border: solid #b5b5b5; border-width: 1px 0; margin: 10px 0 5px; flex: none; }
.rail button { width: 24px; height: 24px; display: flex; align-items: center; justify-content: center; border-radius: 3px; flex: none; }
.rail .cur { background: #b0b0b0; color: #333; }
.rail .off { color: #bdbdbd; }
.rail hr { width: 30px; border: 0; border-top: 1px solid #c5c5c5; margin: 0; }
.rail .more { color: #777; }

/* status bar */
.status { flex: none; height: 29px; display: flex; align-items: center; padding: 1px 14px 0; color: #9c9c9c; }
.status > .vsep { margin: 0 12px 0 15px; }
.protect { display: flex; align-items: center; gap: 5px; color: #5a8540; }
.protect svg { color: #777; }
.status .protect + .vsep { margin: 0 12px; }
.views { margin-left: auto; display: flex; align-items: center; gap: 10px; }
.pair { display: flex; align-items: center; gap: 1px; margin-right: -2px; }
.pair .arr { margin-left: 1px; }
.dark { color: #3c3c3c; }
.status .views + .vsep { margin: 0 11px 0 12px; }
.zoom { font-size: 12px; color: #b0b0b0; display: flex; align-items: center; gap: 3px; }
.minus { width: 12px; height: 1px; background: #999; margin: 0 11px; }
.slider { appearance: none; width: 163px; height: 15px; background: none; }
.slider::-webkit-slider-runnable-track { height: 1px; background: #333; }
.slider::-webkit-slider-thumb { appearance: none; width: 12px; height: 12px; margin-top: -6px; border: 1px solid #333; border-radius: 50%; }

/* wizard window */
.dialog { position: absolute; left: 427px; top: 260px; width: 530px; border: 1px solid #707070; background: #f0f0f0; color: #111; }
.dlgbar { background: #fff; height: 25px; display: flex; align-items: center; gap: 4px; padding: 0 10px 0 3px; }
.dlgbar h1 { flex: 1; margin: 0; font: 12px/16px "DejaVu Sans", "Noto Sans CJK SC", sans-serif; }
.intro { margin: 0; padding: 8px 11px 0; line-height: 17px; font-family: "Noto Sans CJK SC", sans-serif; }
.dialog fieldset { border: 1px solid #dcdcdc; padding: 0; }
.dialog legend { padding: 1px 3px 0; line-height: 16px; }
.types { margin: 16px 12px 0 11px; }
.types legend { margin-left: 6px; }
.types p { margin: 14px 0 6px 12px; line-height: 16px; }
.opt { height: 23px; display: flex; align-items: center; padding-left: 20px; }
.types .opt:last-child { margin-bottom: 10px; }
.opt label { width: 98px; display: flex; align-items: center; gap: 6px; height: 23px; }
.opt input { appearance: none; width: 13px; height: 13px; border: 1px solid #333; border-radius: 50%; background: #fff; }
.opt input:checked { background: radial-gradient(circle, #222 0 3px, #fff 4px); }
.marked { position: relative; }
.marked::after { content: ""; position: absolute; inset: -7px 5px -2px -22px; border: 3px solid #dc1414; box-shadow: 2px 3px 4px rgba(0,0,0,.45), inset 2px 3px 4px rgba(0,0,0,.3); }
.preview { margin: 51px 6px 0; }
.preview legend { margin-left: 6px; }
.prevbox { margin: -1px 9px 3px; height: 158px; border: 1px solid #7a7a7a; background: linear-gradient(90deg, #f0f0f0 16px, #fff 16px); display: flex; align-items: flex-start; }
.ln { width: 16px; height: 20px; line-height: 20px; background: #fff; text-align: center; }
.txt { line-height: 18px; margin: 2px 0 0 3px; border-right: 1px solid #000; padding-right: 12px; }
.btns { display: flex; justify-content: flex-end; gap: 8px; padding: 4px 7px 7px; }
.btns button { width: 77px; height: 30px; background: #e1e1e1; border: 1px solid #adadad; }
.btns button:disabled { background: #ccc; border-color: #bfbfbf; color: #9a9a9a; }
.btns .next { border: 2px solid #0a74c8; position: relative; }
.next::after { content: ""; position: absolute; inset: -18px -9px -7px -5px; border: 3px solid #dc1414; box-shadow: 2px 3px 4px rgba(0,0,0,.45), inset 2px 3px 4px rgba(0,0,0,.3); }

/* corner mark */
.mark { position: absolute; right: 10px; bottom: 6px; display: flex; align-items: center; gap: 2px; opacity: .85; pointer-events: none; }
.streak { position: absolute; right: 0; bottom: -4px; }
.swirl { position: relative; }
.mark div { position: relative; display: flex; flex-direction: column; }
.mark b { font-size: 21px; line-height: 26px; color: #4c92cf; text-shadow: 0 0 2px #fff; }
.mark span { font: 700 16px/18px "Liberation Sans", sans-serif; color: #55b568; text-shadow: 0 0 2px #fff; }
```
